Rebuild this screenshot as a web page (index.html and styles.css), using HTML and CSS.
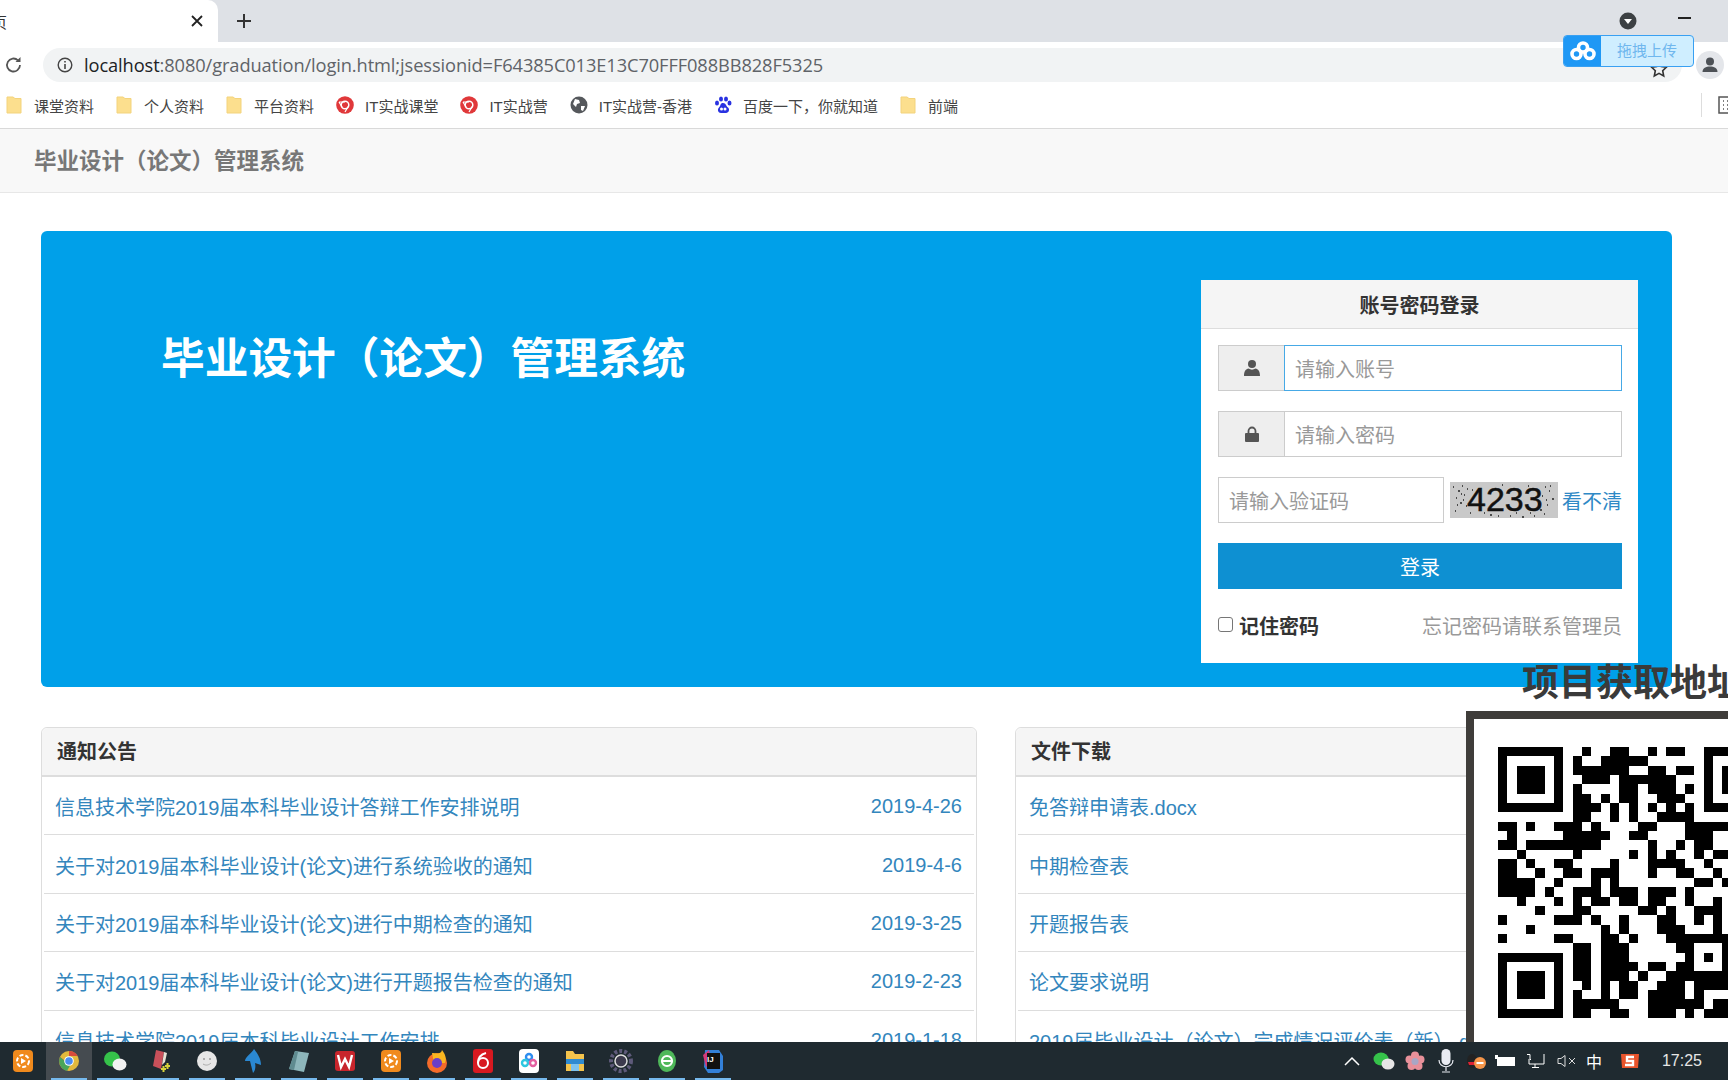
FILE: index.html
```html
<!DOCTYPE html>
<html lang="zh-CN">
<head>
<meta charset="utf-8">
<title>毕业设计（论文）管理系统</title>
<link rel="stylesheet" href="styles.css">
</head>
<body>
<div class="screen">
  <header class="tabstrip">
    <div class="tab">
      <span class="tab-title">页</span>
      <svg class="tab-close" viewBox="0 0 12 12" width="12" height="12"><path d="M1 1l10 10M11 1L1 11" stroke="#222" stroke-width="1.8" fill="none"/></svg>
    </div>
    <svg class="tab-new" viewBox="0 0 16 16" width="16" height="16"><path d="M8 1v14M1 8h14" stroke="#333" stroke-width="2" fill="none"/></svg>
    <div class="strip-end">
      <svg viewBox="0 0 18 18" width="18" height="18"><circle cx="9" cy="9" r="8.5" fill="#3c4043"/><path d="M5 7h8l-4 5z" fill="#fff"/></svg>
      <span class="minimize"></span>
    </div>
  </header>

  <div class="toolbar">
    <svg class="reload" viewBox="0 0 20 20" width="20" height="20"><path d="M16 10a6.500 6.500 0 1 1-2-4.700" stroke="#555" stroke-width="1.800" fill="none"/><path d="M16.500 2v5h-5z" fill="#555"/></svg>
    <div class="omnibox">
      <svg viewBox="0 0 16 16" width="16" height="16"><circle cx="8" cy="8" r="6.800" stroke="#444" stroke-width="1.400" fill="none"/><path d="M8 7v5M8 4v1.600" stroke="#444" stroke-width="1.600"/></svg>
      <span class="url"><b>localhost</b>:8080/graduation/login.html;jsessionid=F64385C013E13C70FFF088BB828F5325</span>
      <svg class="star" viewBox="0 0 18 18" width="18" height="18"><path d="M9 1.500l2.300 4.900 5.200.7-3.800 3.600 1 5.300L9 13.400 4.300 16l1-5.300L1.500 7.100l5.200-.7z" stroke="#333" stroke-width="1.600" fill="none"/></svg>
    </div>
    <div class="avatar">
      <svg viewBox="0 0 28 28" width="28" height="28"><circle cx="14" cy="14" r="14" fill="#e4e6ea"/><circle cx="14" cy="10.500" r="4" fill="#4d5156"/><path d="M6.500 21c0-4 3.500-5.500 7.500-5.500s7.500 1.500 7.500 5.500z" fill="#4d5156"/></svg>
    </div>
  </div>

  <nav class="bookmarks">
    <a class="bookmark"><svg class="folder" viewBox="0 0 16 18"><path d="M1 1h6l2 1.500h6V17H1z" fill="#fcdf8e" stroke="#f3d37d"/></svg>课堂资料</a>
    <a class="bookmark"><svg class="folder" viewBox="0 0 16 18"><path d="M1 1h6l2 1.500h6V17H1z" fill="#fcdf8e" stroke="#f3d37d"/></svg>个人资料</a>
    <a class="bookmark"><svg class="folder" viewBox="0 0 16 18"><path d="M1 1h6l2 1.500h6V17H1z" fill="#fcdf8e" stroke="#f3d37d"/></svg>平台资料</a>
    <a class="bookmark tight"><svg class="site" viewBox="0 0 18 18"><circle cx="9" cy="9" r="8.800" fill="#e0383a"/><circle cx="9" cy="9" r="3.800" fill="none" stroke="#fff" stroke-width="1.500"/><path d="M3 6h6M12.500 10L9 16M6 11L3 6" stroke="#fff" stroke-width="1.200"/></svg>IT实战课堂</a>
    <a class="bookmark tight"><svg class="site" viewBox="0 0 18 18"><circle cx="9" cy="9" r="8.800" fill="#e0383a"/><circle cx="9" cy="9" r="3.800" fill="none" stroke="#fff" stroke-width="1.500"/><path d="M3 6h6M12.500 10L9 16M6 11L3 6" stroke="#fff" stroke-width="1.200"/></svg>IT实战营</a>
    <a class="bookmark tight"><svg class="site" viewBox="0 0 18 18"><circle cx="9" cy="9" r="8.500" fill="#55585c"/><path d="M5 3l4 1 1 3-3 1-1 3-3-3zM11 10l4 0-2 5-2-1z" fill="#fff"/></svg>IT实战营-香港</a>
    <a class="bookmark tight"><svg class="site" viewBox="0 0 18 18"><g fill="#2932e1"><ellipse cx="3" cy="7" rx="2" ry="2.600"/><ellipse cx="7" cy="3" rx="2" ry="2.600"/><ellipse cx="12" cy="3" rx="2" ry="2.600"/><ellipse cx="15.500" cy="7" rx="2" ry="2.600"/><path d="M9 7c3 0 3 3 5 4.500s1 5.500-2 5.500H7c-3 0-4-3.500-2-5.500S6 7 9 7z"/></g><circle cx="7.500" cy="13" r="1.500" fill="#fff"/><circle cx="11" cy="13" r="1.500" fill="#fff"/></svg>百度一下，你就知道</a>
    <a class="bookmark"><svg class="folder" viewBox="0 0 16 18"><path d="M1 1h6l2 1.500h6V17H1z" fill="#fcdf8e" stroke="#f3d37d"/></svg>前端</a>
    <span class="bookmarks-end"><svg viewBox="0 0 16 18" width="16" height="18"><path d="M1 1h15v16H1z" fill="none" stroke="#555" stroke-width="1.500"/><path d="M5 5h1M5 9h1M5 13h1M9 5h7M9 9h7M9 13h7" stroke="#555" stroke-width="1.500"/></svg></span>
  </nav>

  <div class="navbar"><a class="brand">毕业设计（论文）管理系统</a></div>

  <main class="content">
    <section class="hero">
      <h1 class="hero-title">毕业设计（论文）管理系统</h1>
      <form class="login">
        <h2 class="login-head">账号密码登录</h2>
        <div class="login-body">
          <div class="field">
            <span class="addon"><svg viewBox="0 0 16 18" width="16" height="18"><circle cx="8" cy="5" r="4" fill="#555"/><path d="M0 17c0-5 2-7 4.500-7.500 2 1.500 5 1.500 7 0C14 10 16 12 16 17z" fill="#555"/></svg></span>
            <span class="control focus">请输入账号</span>
          </div>
          <div class="field">
            <span class="addon"><svg viewBox="0 0 14 16" width="14" height="16"><path d="M3.500 8V5a3.500 3.500 0 0 1 7 0v3" fill="none" stroke="#555" stroke-width="1.800"/><rect y="7" width="14" height="9" rx="1" fill="#555"/></svg></span>
            <span class="control">请输入密码</span>
          </div>
          <div class="field captcha-row">
            <span class="control solo">请输入验证码</span>
            <svg class="captcha" viewBox="0 0 108 36" width="108" height="36">
              <rect width="108" height="36" fill="#c9c9c9"/>
              <path d="M3 5h1M8 9h2M12 4h1M6 16h1M10 21h2M14 13h1M16 24h1M5 29h1M22 8h1M20 31h1M40 33h2M52 3h1M60 34h1M72 35h2M78 4h1M95 5h1M99 9h1M102 17h2M97 23h1M90 28h2M94 32h1M86 8h1M100 4h1M80 31h1M17 7h1M11 12h1M7 23h1M13 18h1M92 14h1M96 18h1M88 22h1M84 34h1M34 31h1M48 34h1M66 31h1" stroke="#222" stroke-width="1.600" fill="none"/>
              <text class="captcha-text" x="17" y="29">4233</text>
            </svg>
            <a class="refresh">看不清</a>
          </div>
          <button class="submit" type="button">登录</button>
          <div class="login-foot">
            <label class="remember"><span class="check"></span>记住密码</label>
            <span class="forgot">忘记密码请联系管理员</span>
          </div>
        </div>
      </form>
    </section>

    <section class="panels">
      <div class="panel">
        <h3 class="panel-head">通知公告</h3>
        <ul class="list">
          <li class="row"><a>信息技术学院2019届本科毕业设计答辩工作安排说明</a><a>2019-4-26</a></li>
          <li class="row"><a>关于对2019届本科毕业设计(论文)进行系统验收的通知</a><a>2019-4-6</a></li>
          <li class="row"><a>关于对2019届本科毕业设计(论文)进行中期检查的通知</a><a>2019-3-25</a></li>
          <li class="row"><a>关于对2019届本科毕业设计(论文)进行开题报告检查的通知</a><a>2019-2-23</a></li>
          <li class="row"><a>信息技术学院2019届本科毕业设计工作安排</a><a>2019-1-18</a></li>
        </ul>
      </div>
      <div class="panel">
        <h3 class="panel-head">文件下载</h3>
        <ul class="list">
          <li class="row"><a>免答辩申请表.docx</a></li>
          <li class="row"><a>中期检查表</a></li>
          <li class="row"><a>开题报告表</a></li>
          <li class="row"><a>论文要求说明</a></li>
          <li class="row"><a>2019届毕业设计（论文）完成情况评价表（新）.docx</a></li>
        </ul>
      </div>
    </section>
  </main>
</div>

<div class="upload-widget">
  <span class="upload-icon"><svg viewBox="0 0 26 20" width="26" height="20"><g fill="none" stroke="#fff" stroke-width="3.600"><circle cx="13" cy="6.500" r="4.500"/><circle cx="6.500" cy="13" r="4.500"/><circle cx="19.500" cy="13" r="4.500"/></g></svg></span>
  <span class="upload-text">拖拽上传</span>
</div>

<aside class="promo">
  <div class="promo-title">项目获取地址</div>
  <div class="promo-code">
    <svg class="qr" viewBox="0 0 29 29" width="271" height="271" shape-rendering="crispEdges">
      <path fill="#000" fill-rule="evenodd" d="M0 0h7v7H0zM1 1v5h5V1zM2 2h3v3H2zM22 0h7v7h-7zM23 1v5h5V1zM24 2h3v3h-3zM0 22h7v7H0zM1 23v5h5v-5zM2 24h3v3H2zM20 20h5v5h-5zM21 21v3h3v-3zM22 22h1v1h-1z"/>
      <path stroke="#000" fill="none" d="M9 .5h1M12 .5h2M16 .5h1M18 .5h2
      M8 1.500h1M11 1.500h5
      M8 2.500h6M16 2.500h2M19 2.500h2
      M9 3.500h3M13 3.500h3M16 3.500h3
      M8 4.500h1M13 4.500h2M16 4.500h3M20 4.500h1
      M8 5.500h2M11 5.500h1M13 5.500h2M17 5.500h3
      M8 6.500h2M10 6.500h1M12 6.500h1M14 6.500h1M16 6.500h1M18 6.500h1M20 6.500h1
      M8 7.500h2M12 7.500h1M14 7.500h1M17 7.500h4
      M0 8.500h2M3 8.500h1M6 8.500h3M10 8.500h1M15 8.500h2M20 8.500h5
      M1 9.500h1M7 9.500h5M14 9.500h2M20 9.500h3
      M0 10.500h2M3 10.500h8M16 10.500h1M19 10.500h1M21 10.500h2
      M2 11.500h1M8 11.500h1M14 11.500h1M16 11.500h1M18 11.500h1M21 11.500h1M23 11.500h2
      M0 12.500h2M3 12.500h1M6 12.500h2M12 12.500h1M16 12.500h4M22 12.500h1
      M0 13.500h2M4 13.500h1M7 13.500h2M10 13.500h3M16 13.500h1M19 13.500h2M23 13.500h1
      M0 14.500h4M6 14.500h1M10 14.500h1M12 14.500h1M21 14.500h2M24 14.500h1
      M0 15.500h4M5 15.500h1M8 15.500h3M12 15.500h3M16 15.500h3M20 15.500h1
      M2 16.500h1M6 16.500h1M8 16.500h1M10 16.500h2M13 16.500h2M16 16.500h2M20 16.500h1M23 16.500h1
      M4 17.500h1M8 17.500h2M15 17.500h2M18 17.500h1M21 17.500h3
      M0 18.500h1M6 18.500h3M10 18.500h1M13 18.500h1M17 18.500h2M21 18.500h1M23 18.500h1
      M3 19.500h1M11 19.500h1M13 19.500h1M17 19.500h3M23 19.500h1
      M0 20.500h1M6 20.500h2M11 20.500h2M14 20.500h1M18 20.500h2
      M8 21.500h2M11 21.500h3M19 21.500h1
      M8 22.500h2M11 22.500h3
      M8 23.500h2M11 23.500h4M16 23.500h2M19 23.500h1
      M8 24.500h2M11 24.500h3M15 24.500h1M18 24.500h2
      M9 25.500h1M11 25.500h1M13 25.500h2M17 25.500h3M21 25.500h4
      M8 26.500h1M11 26.500h1M13 26.500h2M16 26.500h4M21 26.500h1
      M8 27.500h5M16 27.500h6M23 27.500h2
      M8 28.500h2M12 28.500h2M16 28.500h3M20 28.500h1M22 28.500h3"/>
    </svg>
  </div>
</aside>

<footer class="taskbar">
  <div class="apps">
    <span class="app"><svg viewBox="0 0 22 24" width="22" height="24"><rect x="1" y="1" width="20" height="22" rx="4" fill="#f08a1d"/><circle cx="11" cy="12" r="6" fill="none" stroke="#fff" stroke-width="2" stroke-dasharray="4 2"/><path d="M9 9l5 3-5 3z" fill="#fff"/></svg></span>
    <span class="app running hover"><svg viewBox="0 0 22 22" width="22" height="22"><circle cx="11" cy="11" r="10" fill="#e2b93c"/><path d="M11 1a10 10 0 0 1 8.700 5H11zM2 7a10 10 0 0 0 6 13l3-6z" fill="#d84b3c"/><path d="M2 7a10 10 0 0 0 7 13.800L13 14 7 11z" fill="#4aa55a"/><circle cx="11" cy="11" r="4.800" fill="#fff"/><circle cx="11" cy="11" r="3.800" fill="#4a8df0"/></svg></span>
    <span class="app running"><svg viewBox="0 0 24 22" width="24" height="22"><ellipse cx="9" cy="9" rx="8" ry="7.500" fill="#35c24a"/><ellipse cx="16.500" cy="14.500" rx="7" ry="6" fill="#f2f2f2"/></svg></span>
    <span class="app running"><svg viewBox="0 0 20 26" width="20" height="26"><path d="M5 2l8 2-3 17-8-3z" fill="#c9505a"/><path d="M13 4l3 1-2 9-3 3z" fill="#e9e3d5"/><path d="M14 18h5M16.500 15v6M10 21h5M12.500 18v6" stroke="#d7d23b" stroke-width="2"/></svg></span>
    <span class="app running"><svg viewBox="0 0 22 22" width="22" height="22"><circle cx="11" cy="11" r="10" fill="#e6e6e6"/><circle cx="8" cy="9" r="1" fill="#999"/><circle cx="14" cy="9" r="1" fill="#999"/><path d="M7 14c3 2 6 1 8-1" stroke="#aaa" fill="none"/></svg></span>
    <span class="app running"><svg viewBox="0 0 20 26" width="20" height="26"><path d="M11 1c-2 4-9 8-9 12h5l3 12c2-2 3-6 2-10l6 2c0-6-3-11-7-16z" fill="#2a88d2"/></svg></span>
    <span class="app running"><svg viewBox="0 0 22 24" width="22" height="24"><path d="M7 2l14 2-5 19L1 20z" fill="#8db6bb"/><path d="M7 2l3 1L6 21l-5-1z" fill="#5f8b90"/></svg></span>
    <span class="app running"><svg viewBox="0 0 22 22" width="22" height="22"><rect x="1" y="1" width="20" height="20" rx="3" fill="#c8252c"/><path d="M4 5l3 12 4-8 4 8 3-12" stroke="#fff" stroke-width="2.400" fill="none"/></svg></span>
    <span class="app running"><svg viewBox="0 0 22 24" width="22" height="24"><rect x="1" y="1" width="20" height="22" rx="4" fill="#f08a1d"/><circle cx="11" cy="12" r="6" fill="none" stroke="#fff" stroke-width="2" stroke-dasharray="4 2"/><path d="M9 9l5 3-5 3z" fill="#fff"/></svg></span>
    <span class="app running"><svg viewBox="0 0 22 24" width="22" height="24"><circle cx="11" cy="14" r="10" fill="#f46b2a"/><path d="M6 4c3 0 9 2 10-3 3 4 5 8 3 13H8z" fill="#f9b620"/><circle cx="11" cy="14" r="5" fill="#6a3ec8"/></svg></span>
    <span class="app running"><svg viewBox="0 0 20 24" width="20" height="24"><rect width="20" height="24" rx="3" fill="#d71920"/><circle cx="10" cy="14" r="5" fill="none" stroke="#fff" stroke-width="2"/><path d="M13 4c-4 1-8 4-8 10" stroke="#fff" stroke-width="2" fill="none"/></svg></span>
    <span class="app running"><svg viewBox="0 0 20 24" width="20" height="24"><rect width="20" height="24" rx="4" fill="#fff"/><g fill="none" stroke-width="2.400"><circle cx="10" cy="8" r="3" stroke="#2e8df0"/><circle cx="6" cy="14" r="3" stroke="#2ec7e0"/><circle cx="14" cy="14" r="3" stroke="#e35fa0"/></g></svg></span>
    <span class="app running"><svg viewBox="0 0 20 22" width="20" height="22"><path d="M1 1h7l2 3h9v17H1z" fill="#f4c34c"/><rect x="1" y="9" width="18" height="5" fill="#2f8ad0"/><rect x="6" y="14" width="8" height="7" fill="#7fc3ee"/></svg></span>
    <span class="app running"><svg viewBox="0 0 24 24" width="24" height="24"><circle cx="12" cy="12" r="10" fill="none" stroke="#5e5a7a" stroke-width="4" stroke-dasharray="3 2"/><circle cx="12" cy="12" r="6" fill="#3c3a4d" stroke="#ddd" stroke-width="1.500"/></svg></span>
    <span class="app running"><svg viewBox="0 0 20 24" width="20" height="24"><ellipse cx="10" cy="12" rx="9" ry="11" fill="#4fb85a"/><circle cx="10" cy="12" r="5" fill="none" stroke="#fff" stroke-width="2.200"/><path d="M5 12h10" stroke="#fff" stroke-width="2"/></svg></span>
    <span class="app running"><svg viewBox="0 0 22 24" width="22" height="24"><path d="M3 1h14l4 6v14l-4 3H6l-4-6z" fill="#3380d8"/><path d="M1 6l6-5 3 12-6 5z" fill="#d63a7a"/><rect x="5" y="4" width="13" height="16" fill="#111"/></svg><span class="ij">IJ</span></span>
  </div>
  <div class="tray">
    <svg class="tray-chevron" viewBox="0 0 16 10" width="16" height="10"><path d="M1 9l7-7 7 7" stroke="#fff" stroke-width="1.500" fill="none"/></svg>
    <svg class="tray-wechat" viewBox="0 0 22 18" width="22" height="18"><ellipse cx="8" cy="7" rx="7.500" ry="6.500" fill="#35c24a"/><ellipse cx="15" cy="12" rx="6.500" ry="5.500" fill="#e6e6e6"/></svg>
    <svg class="tray-flower" viewBox="0 0 20 20" width="20" height="20"><g fill="#e8909a"><circle cx="10" cy="4.500" r="4"/><circle cx="15.500" cy="8.500" r="4"/><circle cx="13.500" cy="15" r="4"/><circle cx="6.500" cy="15" r="4"/><circle cx="4.500" cy="8.500" r="4"/></g><circle cx="10" cy="10.500" r="3.500" fill="#a9a6c5"/></svg>
    <svg class="tray-mic" viewBox="0 0 16 24" width="16" height="24"><rect x="3.500" y="0" width="9" height="16" rx="4.500" fill="#e8ebf2"/><path d="M1 11c0 9 14 9 14 0M8 18v4M4 23h8" stroke="#e8ebf2" stroke-width="1.200" fill="none"/></svg>
    <svg class="tray-qq" viewBox="0 0 20 18" width="20" height="18"><ellipse cx="6" cy="9" rx="5" ry="7" fill="#222"/><path d="M2 10h8l-1 3H3z" fill="#d23"/><circle cx="14" cy="11" r="6" fill="#f5964a"/><rect x="10.500" y="10" width="7" height="2" fill="#fff"/></svg>
    <svg class="tray-battery" viewBox="0 0 22 12" width="22" height="12"><rect x="2" y="2" width="18" height="9" fill="#fff"/><rect x="0" y="0" width="3" height="4" fill="#fff"/></svg>
    <svg class="tray-net" viewBox="0 0 20 14" width="20" height="14"><path d="M2 .500h3v5h1M4 5v5h15V0M10 10v3M7 13.500h7" stroke="#fff" fill="none"/></svg>
    <svg class="tray-sound" viewBox="0 0 20 12" width="20" height="12"><path d="M1 3.500h3l4-3v11l-4-3H1zM12 3l6 6M18 3l-6 6" stroke="#ddd" fill="none"/></svg>
    <span class="tray-ime">中</span>
    <svg class="tray-sogou" viewBox="0 0 20 16" width="20" height="16"><path d="M1 1h18l-1 14H2z" fill="#e9542c"/><path d="M14 4H7v4h6v4H5" stroke="#fff" stroke-width="2.400" fill="none"/></svg>
    <span class="tray-time">17:25</span>
  </div>
</footer>
</body>
</html>
```
FILE: styles.css
```css
* { box-sizing: border-box; }
html, body { margin: 0; padding: 0; }
body {
  position: relative;
  width: 1728px;
  height: 1080px;
  overflow: hidden;
  background: #fff;
  color: #333;
  font-family: "Liberation Sans", "Noto Sans CJK SC", sans-serif;
}
h1, h2, h3, ul { margin: 0; padding: 0; }
ul { list-style: none; }

.screen { display: flex; flex-direction: column; height: 1080px; overflow: hidden; }

.tabstrip { display: flex; align-items: center; height: 42px; flex: none; background: #dee1e6; }
.tab {
  display: flex; align-items: center; justify-content: space-between;
  width: 218px; height: 42px; padding: 0 15px 0 0;
  background: #fff; border-top-right-radius: 10px; overflow: hidden;
}
.tab-title { margin-left: -8px; font-size: 15px; color: #333; }
.tab-new { margin-left: 18px; }
.strip-end { display: flex; align-items: center; margin-left: auto; padding: 0 37px 0 0; gap: 41px; }
.minimize { width: 13px; height: 2px; margin-top: -6px; background: #222; }

.toolbar { display: flex; align-items: center; height: 40px; flex: none; padding: 6px 4px 0 4px; background: #fff; }
.reload { flex: none; margin-right: 19px; }
.omnibox {
  display: flex; align-items: center; flex: 1; height: 34px; margin-right: 14px; padding: 0 14px 0 14px;
  border-radius: 17px; background: #f1f3f4; font-size: 18.250px; color: #5f6368;
  font-family: "Open Sans", "Liberation Sans", sans-serif;
}
.url { margin: -2px 0 0 11px; white-space: nowrap; letter-spacing: -0.100px; }
.url b { font-weight: 400; color: #202124; }
.star { margin-left: auto; margin-top: 8px; }
.avatar { display: flex; width: 28px; flex: none; }

.bookmarks {
  display: flex; align-items: center; gap: 22px; height: 47px; flex: none;
  padding: 0 0 0 6px; background: #fff; border-bottom: 1px solid #d9d9d9;
  font-size: 15px; color: #444;
}
.bookmark { display: flex; align-items: center; gap: 12px; white-space: nowrap; }
.bookmark.tight { gap: 11px; }
.folder { width: 16px; height: 18px; flex: none; }
.site { width: 18px; height: 18px; flex: none; }
.bookmarks-end { margin-left: auto; padding-left: 16px; border-left: 1px solid #ddd; display: flex; height: 24px; align-items: center; margin-right: -6px; }

.navbar { display: flex; align-items: center; height: 64px; flex: none; padding: 0 0 4px 34px; background: #f8f8f8; border-bottom: 1px solid #e7e7e7; }
.brand { font-size: 22.500px; font-weight: 700; color: #777; }

.content { display: flex; flex-direction: column; gap: 40px; padding: 38px 56px 0 41px; }

.hero {
  display: flex; justify-content: space-between; align-items: flex-start; flex: none;
  height: 456px; padding: 49px 34px 24px 120px;
  border-radius: 6px; background: #00a0e9;
}
.hero-title { margin-top: 51px; font-size: 43.700px; line-height: 56px; font-weight: 700; color: #fff; }

.login { width: 437px; height: 383px; background: #fff; }
.login-head {
  height: 49px; padding-top: 4px; line-height: 44px; text-align: center; font-size: 20px; font-weight: 700; color: #333;
  background: #f5f5f5; border-bottom: 1px solid #ddd;
}
.login-body { display: flex; flex-direction: column; gap: 20px; padding: 16px 16px 0 17px; }
.field { display: flex; height: 46px; font-size: 20px; }
.addon {
  display: flex; align-items: center; justify-content: center; width: 66px; flex: none;
  background: #eee; border: 1px solid #ccc; border-right: 0;
}
.control {
  display: flex; align-items: center; flex: 1; padding: 0 10px; background: #fff;
  border: 1px solid #ccc; color: #999;
}
.control.focus { border-color: #46a9e6; }
.captcha-row { align-items: center; }
.control.solo { flex: none; width: 226px; height: 46px; }
.captcha { flex: none; margin-left: 6px; }
.captcha-text { font-family: "Liberation Sans", sans-serif; font-size: 34px; fill: #111; stroke: #111; stroke-width: 0.500px; }
.refresh { margin-left: 4px; color: #2f89c6; white-space: nowrap; }
.submit {
  height: 46px; border: 0; padding: 0; background: #0e90d2; color: #fff;
  font: inherit; font-size: 20px;
}
.login-foot { display: flex; justify-content: space-between; align-items: center; margin-top: 2px; font-size: 20px; }
.remember { display: flex; align-items: center; gap: 6px; font-weight: 700; color: #333; }
.check { width: 15px; height: 15px; margin-top: -2px; border: 1px solid #767676; border-radius: 3px; background: #fff; }
.forgot { color: #999; }

.panels { display: grid; grid-template-columns: 936px 657px; gap: 38px; flex: none; }
.panel { padding: 0 2px; border: 1px solid #ddd; border-top-left-radius: 6px; border-top-right-radius: 6px; }
.panel-head {
  height: 49px; margin: 0 -2px; padding-left: 15px; line-height: 48px; font-size: 20px; font-weight: 700; color: #333;
  background: #f5f5f5; border-bottom: 2px solid #ddd; border-top-left-radius: 6px; border-top-right-radius: 6px;
}
.list { font-size: 20px; }
.row {
  display: flex; justify-content: space-between; align-items: center; height: 58.400px;
  padding: 2px 12px 0 11px; border-bottom: 1px solid #ddd; color: #3386bd;
}
.row a { white-space: nowrap; }

.upload-widget {
  position: absolute; left: 1563px; top: 35px; display: flex; width: 131px; height: 32px;
  border: 1px solid #39a0f2; border-radius: 4px; background: #cfeeff; overflow: hidden;
}
.upload-icon { display: flex; align-items: center; justify-content: center; width: 37px; flex: none; background: #1f98f5; }
.upload-text { flex: 1; line-height: 29px; text-align: center; font-size: 15px; color: #70b7ee; }

.promo { position: absolute; left: 1466px; top: 660px; width: 300px; height: 394px; }
.promo-title { height: 51px; margin-left: 56px; line-height: 48px; font-size: 37px; font-weight: 700; color: #3a3a3a; white-space: nowrap; }
.promo-code { height: 343px; padding: 28px 0 0 24px; background: #fff; border: 8px solid #3f3d3a; }
.qr { display: block; }

.taskbar {
  position: absolute; left: 0; right: 0; bottom: 0; display: flex; justify-content: space-between;
  height: 38px; background: #1f2a30; color: #fff;
}
.apps { display: flex; }
.app { position: relative; display: flex; align-items: center; justify-content: center; width: 46px; height: 38px; }
.app.hover { background: #454b50; }
.app.running::after { content: ""; position: absolute; left: 5px; right: 5px; bottom: 0; height: 2px; background: #76b9ed; }
.ij { position: absolute; left: 17px; top: 13px; font-size: 8px; font-weight: 700; color: #fff; }
.tray { position: relative; display: flex; align-items: center; padding-right: 26px; gap: 0; }
.tray-chevron { margin-right: 13px; }
.tray-wechat { margin-right: 10px; }
.tray-flower { margin-right: 13px; }
.tray-mic { margin-right: 12px; }
.tray-qq { margin-right: 9px; }
.tray-battery { margin-right: 8px; }
.tray-net { margin-right: 12px; }
.tray-sound { margin-right: 9px; }
.tray-ime { margin-right: 18px; font-size: 16px; font-weight: 400; }
.tray-sogou { margin-right: 22px; }
.tray-time { font-size: 16px; color: #e6e6e6; }
```
